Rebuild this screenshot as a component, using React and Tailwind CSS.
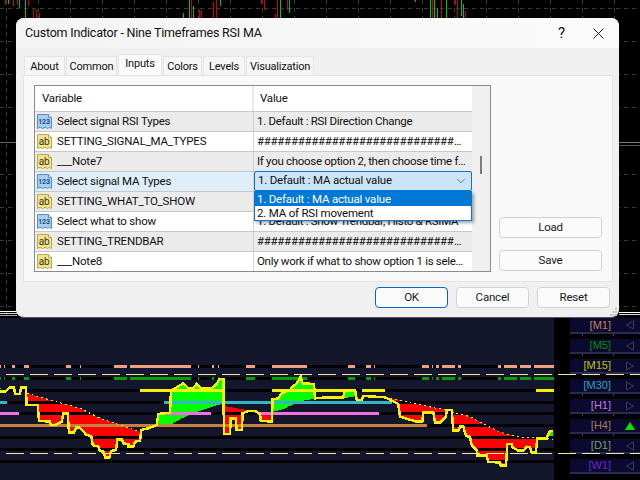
import { ChevronDown } from 'lucide-react'

const rows = [
  { icon: '123', name: 'Select signal RSI Types', value: '1. Default : RSI Direction Change', grey: true },
  { icon: 'ab', name: 'SETTING_SIGNAL_MA_TYPES', value: '##################################################' },
  { icon: 'ab', name: '___Note7', value: 'If you choose option 2, then choose time frame below', grey: true },
  { icon: '123', name: 'Select signal MA Types', combo: true },
  { icon: 'ab', name: 'SETTING_WHAT_TO_SHOW', value: '##################################################', grey: true },
  { icon: '123', name: 'Select what to show', value: '1. Default : Show Trendbar, Histo & RSIMA' },
  { icon: 'ab', name: 'SETTING_TRENDBAR', value: '##################################################', grey: true },
  { icon: 'ab', name: '___Note8', value: 'Only work if what to show option 1 is selected and more' },
]

const tabs = [
  { label: 'About', w: 'w-[41px]' },
  { label: 'Common', w: 'w-[51px]' },
  { label: 'Inputs', w: 'w-[44px]', active: true },
  { label: 'Colors', w: 'w-[39px]' },
  { label: 'Levels', w: 'w-[42px]' },
  { label: 'Visualization', w: 'w-[68px]' },
]

const periods = [
  { label: 'M1', c: 'text-[#c8805f]', dir: 'left' },
  { label: 'M5', c: 'text-[#008c00]', dir: 'left' },
  { label: 'M15', c: 'text-[#c4c400]', dir: 'right' },
  { label: 'M30', c: 'text-[#2aa2bd]', dir: 'right' },
  { label: 'H1', c: 'text-[#c878d8]', dir: 'right' },
  { label: 'H4', c: 'text-[#a87850]', dir: 'up' },
  { label: 'D1', c: 'text-[#78a060]', dir: 'left' },
  { label: 'W1', c: 'text-[#6a28c8]', dir: 'left' },
]

// candles above the dialog: [x, top, bottom, colour]
const R = '#d00000'
const G = '#00c800'
const candles = [
  [5, 0, 5, R], [8, 0, 4, G], [13, 0, 6, R], [17, 0, 5, R], [19, 0, 8, G], [25, 0, 18, G], [28, 0, 6, R], [33, 9, 18, R], [36, 9, 18, R], [39, 13, 18, R],
  [183, 13, 18, G], [189, 0, 18, G], [191, 0, 18, R], [193, 6, 18, G], [199, 10, 18, R], [201, 10, 18, R],
  [213, 2, 18, R], [216, 0, 18, R], [220, 0, 6, G], [261, 0, 4, R], [264, 0, 10, R], [275, 14, 18, R], [277, 0, 18, R], [280, 0, 18, G], [287, 0, 10, R], [289, 0, 13, G],
  [415, 0, 2, G], [430, 0, 18, G], [432, 0, 18, R], [434, 0, 18, G], [437, 8, 18, G], [441, 0, 18, R], [446, 0, 18, G], [455, 0, 5, R], [457, 0, 18, R], [461, 0, 16, G], [463, 4, 18, G], [465, 11, 18, R],
]

const gridX = Array.from({ length: 20 }, (_, i) => 6 + i * 32)
const gridY = [8, 41, 74, 107, 142, 174, 207, 240, 273, 306]

const bands = [365, 377, 389, 401, 412, 424, 436, 448, 460]

const trendXs = [[0, 1], [4, 5], [12, 15], [24, 29], [66, 71], [80, 81], [114, 127], [130, 191], [198, 199], [212, 214], [218, 219], [246, 255], [272, 307], [348, 355], [366, 371], [374, 375], [422, 429], [432, 433], [436, 439], [442, 455], [458, 461], [498, 501], [504, 517], [520, 531], [534, 554]]

const sets = [
  { y: 365, c: '#f0a080', xs: trendXs },
  { y: 377, c: '#00a000', xs: trendXs },
  { y: 389, c: '#f4f000', xs: [[140, 224], [272, 355], [362, 385], [536, 554]] },
  { y: 401, c: '#30b8c8', xs: [[0, 7], [164, 392]] },
  { y: 412, c: '#f070e0', xs: [[0, 19], [164, 211], [260, 379]] },
  { y: 424, c: '#c88040', xs: [[0, 427]] },
]

// zoomed crop coordinates -> page coordinates
const a = pts => pts.map(([x, y]) => `${(x / 3).toFixed(1)},${(y / 3 + 310).toFixed(1)}`).join(' ')
const b = pts => pts.map(([x, y]) => `${(x / 3 + 290).toFixed(1)},${(y / 3 + 310).toFixed(1)}`).join(' ')

const lineA = [[0, 245], [15, 245], [28, 233], [42, 232], [45, 252], [60, 252], [63, 233], [77, 233], [80, 285], [113, 285], [117, 332], [150, 335], [152, 345], [165, 345], [185, 335], [190, 310], [203, 310], [207, 368], [222, 368], [228, 352], [238, 352], [260, 375], [274, 378], [278, 405], [295, 410], [300, 423], [312, 425], [315, 443], [328, 443], [333, 423], [348, 420], [352, 388], [365, 388], [370, 400], [385, 403], [385, 410], [400, 410], [405, 395], [420, 392], [424, 360], [445, 355], [470, 345], [475, 312], [510, 308], [513, 242], [530, 232], [550, 220], [565, 235], [580, 235], [590, 222], [603, 235], [635, 235], [650, 222], [658, 207], [670, 207], [672, 372], [690, 372], [692, 325], [707, 325], [710, 360], [725, 360], [728, 310], [745, 303], [765, 303], [780, 312], [782, 332], [815, 335], [818, 268], [835, 265], [845, 250], [870, 240]]
const lineB = [[0, 237], [20, 220], [32, 200], [37, 220], [72, 222], [75, 265], [115, 262], [160, 262], [165, 240], [195, 240], [200, 270], [215, 270], [220, 258], [285, 262], [305, 272], [325, 282], [330, 320], [380, 335], [397, 335], [400, 307], [430, 307], [435, 337], [450, 337], [468, 320], [470, 300], [485, 300], [490, 362], [505, 362], [510, 350], [520, 350], [528, 378], [540, 380], [545, 405], [560, 420], [562, 437], [590, 437], [595, 455], [630, 458], [632, 466], [648, 466], [652, 402], [665, 402], [668, 412], [685, 422], [700, 422], [710, 410], [720, 412], [725, 428], [737, 428], [742, 385], [770, 385], [778, 365], [790, 362]]

const redA = [[80, 250], [150, 270], [240, 295], [300, 325], [420, 365], [420, 392], [405, 395], [400, 410], [385, 410], [370, 400], [365, 388], [352, 388], [348, 420], [333, 423], [328, 443], [315, 443], [312, 425], [300, 423], [295, 410], [278, 405], [274, 378], [260, 375], [238, 352], [228, 352], [222, 368], [207, 368], [203, 310], [190, 310], [185, 335], [165, 345], [152, 345], [150, 335], [117, 332], [113, 285], [80, 285]]
const redA2 = [[672, 288], [740, 300], [780, 305], [815, 312], [815, 335], [782, 332], [780, 312], [745, 303], [728, 310], [725, 360], [710, 360], [707, 325], [692, 325], [690, 372], [675, 372]]
const greenA = [[424, 360], [470, 345], [475, 312], [510, 308], [513, 242], [530, 232], [550, 220], [565, 235], [580, 235], [590, 222], [603, 235], [635, 235], [650, 222], [658, 207], [670, 207], [670, 280], [600, 302], [545, 325], [510, 345], [475, 350]]
const greenA2 = [[818, 268], [835, 265], [845, 250], [870, 240], [870, 287], [850, 298], [818, 305]]
const greenL = [[0, 232], [15, 245], [28, 233], [42, 232], [42, 240], [15, 248], [0, 248]]
const greenB = [[0, 237], [20, 220], [32, 200], [37, 220], [72, 222], [75, 265], [115, 262], [160, 262], [165, 240], [195, 240], [200, 258], [160, 265], [72, 266], [40, 272], [20, 280], [0, 287]]
const redB = [[300, 265], [345, 275], [440, 295], [470, 300], [470, 300], [450, 337], [435, 337], [430, 307], [400, 307], [397, 335], [380, 335], [330, 320], [325, 282], [305, 272]]
const redB2 = [[485, 305], [540, 320], [600, 352], [640, 370], [680, 380], [742, 385], [737, 428], [725, 428], [720, 412], [710, 410], [700, 422], [685, 422], [668, 412], [665, 402], [652, 402], [648, 466], [632, 466], [630, 458], [595, 455], [590, 437], [562, 437], [560, 420], [545, 405], [540, 380], [528, 378], [520, 350], [510, 350], [505, 362], [490, 362]]
const greenB2 = [[778, 365], [790, 362], [790, 378], [778, 378]]

function TopChart() {
  return (
    <svg className="block w-[640px] h-[318px]" viewBox="0 0 640 318">
      {gridY.map(y => <line key={y} x1="0" x2="640" y1={y + 0.5} y2={y + 0.5} stroke="#3c3c3c" strokeDasharray="4 4" />)}
      {gridX.map(x => <line key={x} x1={x + 0.5} x2={x + 0.5} y1="0" y2="318" stroke="#3c3c3c" strokeDasharray="4 4" />)}
      {candles.map(([x, t, bt, c], i) => <rect key={i} x={x} y={t} width="1" height={bt - t} fill={c} />)}
      <rect x="0" y="142" width="16" height="1" fill="#666" />
      <rect x="619" y="142" width="21" height="1" fill="#777" />
      <rect x="619" y="145" width="21" height="1" fill="#555" />
      <rect x="0" y="311" width="17" height="1" fill="#fff" />
      <rect x="0" y="313" width="17" height="1" fill="#ddd" />
      <rect x="0" y="315" width="17" height="1" fill="#aaa" />
      <rect x="619" y="312" width="21" height="1" fill="#fff" />
      <rect x="619" y="314" width="21" height="1" fill="#ddd" />
    </svg>
  )
}

function BottomChart() {
  return (
    <svg className="block w-[570px] h-[162px] flex-shrink-0" viewBox="0 318 570 162" shapeRendering="crispEdges">
      <rect x="0" y="318" width="554" height="162" fill="#14172b" />
      <polygon points={a(greenL)} fill="#00ff00" />
      <polygon points={a(redA)} fill="#ff0000" />
      <polygon points={a(redA2)} fill="#ff0000" />
      <polygon points={a(greenA)} fill="#00ff00" />
      <polygon points={a(greenA2)} fill="#00ff00" />
      <polygon points={b(greenB)} fill="#00ff00" />
      <polygon points={b(redB)} fill="#ff0000" />
      <polygon points={b(redB2)} fill="#ff0000" />
      <polygon points={b(greenB2)} fill="#00ff00" />
      {bands.map(y => <rect key={y} x="0" y={y} width="554" height="3" fill="#000" />)}
      {sets.map(s => s.xs.map(([x1, x2]) => <rect key={s.y + '-' + x1} x={x1} y={s.y} width={x2 - x1} height="3" fill={s.c} />))}
      <line x1="6" x2="554" y1="374.5" y2="374.5" stroke="#efe6a0" strokeDasharray="18 6" />
      <line x1="6" x2="554" y1="453.5" y2="453.5" stroke="#efe6a0" strokeDasharray="18 6" />
      <polyline points={a(lineA)} fill="none" stroke="#f8f400" strokeWidth="2.5" />
      <polyline points={b(lineB)} fill="none" stroke="#f8f400" strokeWidth="2.5" />
      <polyline points={a([[80, 250], [150, 270], [240, 295], [300, 325], [420, 365]])} fill="none" stroke="#f4f000" strokeDasharray="2 3" />
      <polyline points={b([[300, 265], [345, 275], [440, 295], [470, 300]])} fill="none" stroke="#f4f000" strokeDasharray="2 3" />
      <polyline points={b([[485, 305], [540, 320], [600, 352], [640, 370], [680, 380], [790, 388]])} fill="none" stroke="#f4f000" strokeDasharray="2 3" />
    </svg>
  )
}

function PeriodArrow({ dir }) {
  if (dir === 'up') {
    return <svg className="w-[12px] h-[10px]" viewBox="0 0 12 10"><polygon points="6,1 11,9 1,9" fill="#00e800" /></svg>
  }
  return (
    <svg className="w-[12px] h-[10px]" viewBox="0 0 12 10">
      <polygon points={dir === 'left' ? '9.5,1 9.5,9 2.5,5' : '2.5,1 2.5,9 9.5,5'} fill="none" stroke="#3c3c52" />
    </svg>
  )
}

function PeriodPanel() {
  return (
    <div className="relative w-[70px] flex flex-col gap-[5px] font-['Liberation_Sans',sans-serif]">
      {periods.map(p => (
        <div key={p.label} className="h-[15px] first:h-[16px] bg-[#0a0a30] border-b-2 border-[#2b2b52] flex items-center justify-end pr-[4px]">
          <span className={`text-[11px] leading-none ${p.c} mr-[13px]`}>[{p.label}]</span>
          <PeriodArrow dir={p.dir} />
        </div>
      ))}
      <svg className="absolute left-[-12px] top-0 w-[82px] h-[162px]" viewBox="0 318 82 162">
        <line x1="0" x2="82" y1="374.5" y2="374.5" stroke="#efe6a0" strokeDasharray="18 6" />
        <line x1="0" x2="82" y1="453.5" y2="453.5" stroke="#efe6a0" strokeDasharray="18 6" />
        {[334, 354, 394, 414, 434].map(y => (
          <g key={y} fill="#4a4a4a">
            <rect x="24" y={y} width="1" height="2" />
            <rect x="55" y={y} width="1" height="2" />
          </g>
        ))}
      </svg>
    </div>
  )
}

function VarIcon({ kind }) {
  const blue = kind === '123'
  return (
    <svg className="w-[17px] h-[17px] flex-shrink-0" viewBox="0 0 17 17">
      <path
        d="M1.5 1.5h11l3 3v11l-2-1.2-2 1.2-2.5-1.2-2.5 1.2-2.5-1.2-2.5 1.2z"
        fill={blue ? '#a8cdee' : '#f2e48c'}
        stroke={blue ? '#5a8fc4' : '#b8a850'}
      />
      <path d="M12.5 1.5v3h3" fill={blue ? '#e4f0fb' : '#fbf5cc'} stroke={blue ? '#5a8fc4' : '#b8a850'} />
      <text
        x="8"
        y={blue ? 11 : 11.5}
        textAnchor="middle"
        fontSize={blue ? 7 : 10}
        fontWeight={blue ? 700 : 400}
        fill={blue ? '#1c4f86' : '#3a3210'}
        fontFamily="Roboto, sans-serif"
      >
        {kind}
      </text>
    </svg>
  )
}

function Btn({ children, w = 'w-[73px]', primary }) {
  return (
    <button className={`${w} h-[21px] rounded-[4px] bg-[#fbfbfb] border text-[11.5px] tracking-[-0.2px] leading-none text-[#1a1a1a] ${primary ? 'border-[#0067c0]' : 'border-[#d2d2d2]'}`}>
      {children}
    </button>
  )
}

function Dialog() {
  return (
    <div className="absolute left-[16px] top-[18px] w-[603px] h-[300px] rounded-[8px] bg-[#f0f0f0] border-b border-[#555] flex flex-col text-[#111] font-[Roboto,sans-serif]">
      {/* Title */}
      <div className="h-[30px] flex-shrink-0 rounded-t-[8px] bg-gradient-to-r from-[#f4f4f4] to-[#fafafa] flex items-center pl-[9px] pr-[15px]">
        <span className="text-[12.5px] tracking-[-0.2px]">Custom Indicator - Nine Timeframes RSI MA</span>
        <span className="ml-auto text-[15px] mr-[28px]">?</span>
        <svg className="w-[11px] h-[11px]" viewBox="0 0 11 11"><path d="M0.5 0.5l10 10M10.5 0.5l-10 10" stroke="#222" fill="none" /></svg>
      </div>

      {/* Tabs */}
      <div className="flex items-end h-[27px] pl-[8px] flex-shrink-0">
        {tabs.map(t => (
          <div key={t.label} className={`${t.w} text-center text-[11px] tracking-[-0.2px] border border-b-0 border-[#e4e4e4] mr-[1px] ${t.active ? 'h-[21px] bg-[#fbfbfb] leading-[18px]' : 'h-[19px] bg-[#f6f6f6] leading-[20px]'}`}>
            {t.label}
          </div>
        ))}
      </div>

      {/* Panel */}
      <div className="mx-[7px] w-[590px] h-[207px] flex-shrink-0 bg-[#f9f9f9] border border-[#e4e4e4] pl-[10px] pt-[9px] flex gap-[8px]">
        <div className="w-[457px] h-[187px] border border-[#8a8a94] bg-white flex text-[11.5px] tracking-[-0.2px]">
          <div className="w-[437px] flex flex-col">
            <div className="h-[25px] flex items-center flex-shrink-0">
              <div className="w-[219px] pl-[7px] h-full flex items-center border-r-2 border-[#e8e8e8]">Variable</div>
              <div className="pl-[6px]">Value</div>
            </div>
            {rows.map(r => (
              <div key={r.name} className={`h-[20px] flex border-t border-[#c8c8c8] ${r.combo ? 'bg-[#deeefa]' : r.grey ? 'bg-[#ebebeb]' : 'bg-white'}`}>
                <div className="w-[219px] flex-shrink-0 pl-[1px] flex items-center gap-[4px] border-r border-[#d4d4d4]">
                  <VarIcon kind={r.icon} />
                  <span className="leading-none">{r.name}</span>
                </div>
                {r.combo ? (
                  <div className="relative w-[218px]">
                    <div className="h-[20px] -mt-[1px] bg-[#cce4f7] border border-[#0078d4] rounded-[2px] flex items-center pl-[3px] pr-[3px]">
                      <span>1. Default : MA actual value</span>
                      <ChevronDown className="ml-auto text-[#444]" size={14} strokeWidth={1.2} />
                    </div>
                    <div className="absolute left-0 top-[19px] w-[218px] h-[30px] z-10 bg-white border border-[#0078d4] shadow-[2px_2px_3px_rgba(0,0,0,0.35)] leading-[14px]">
                      <div className="h-[14px] bg-[#0078d7] text-white pl-[2px]">1. Default : MA actual value</div>
                      <div className="h-[14px] pl-[2px]">2. MA of RSI movement</div>
                    </div>
                  </div>
                ) : (
                  <div className="w-[218px] pl-[3px] pr-[6px] tracking-[-0.3px] leading-[19px] whitespace-nowrap overflow-hidden text-ellipsis">{r.value}</div>
                )}
              </div>
            ))}
          </div>
          <div className="w-[18px] bg-[#f0f0f0] relative">
            <div className="absolute left-[8px] top-[70px] w-[2px] h-[18px] bg-[#7c7c7c]" />
          </div>
        </div>
        <div className="flex flex-col gap-[12px] pt-[132px]">
          <Btn w="w-[103px]">Load</Btn>
          <Btn w="w-[103px]">Save</Btn>
        </div>
      </div>

      {/* Footer */}
      <div className="flex justify-end gap-[8px] pr-[9px] pt-[5px]">
        <Btn primary>OK</Btn>
        <Btn>Cancel</Btn>
        <Btn>Reset</Btn>
      </div>
      <svg className="absolute right-[1px] bottom-[1px] w-[8px] h-[8px]" viewBox="0 0 8 8">
        <path d="M5 0h2v2H5zM2.5 3h2v2h-2zM5 3h2v2H5zM0 6h2v2H0zM2.5 6h2v2h-2zM5 6h2v2H5z" fill="#c4c4c4" />
      </svg>
    </div>
  )
}

export default function App() {
  return (
    <div className="relative w-[640px] h-[480px] bg-black overflow-hidden">
      <TopChart />
      <div className="flex">
        <BottomChart />
        <PeriodPanel />
      </div>
      <Dialog />
    </div>
  )
}
